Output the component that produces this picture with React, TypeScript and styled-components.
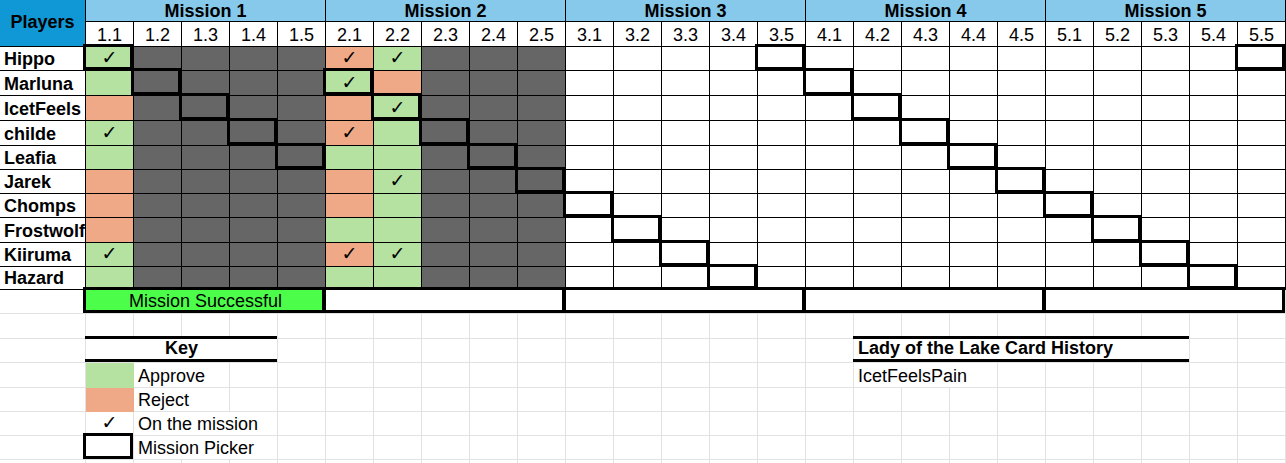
import React from 'react';
import styled, { createGlobalStyle, css } from 'styled-components';

const colors = {
  players: '#0f98d5',
  mission: '#86c9ea',
  approve: '#b6e2a1',
  reject: '#f0a986',
  locked: '#666666',
  success: '#4cfd4a',
  grid: '#e2e2e2',
  line: '#000000',
};

const PLAYERS = ['Hippo', 'Marluna', 'IcetFeels', 'childe', 'Leafia', 'Jarek', 'Chomps', 'Frostwolf', 'Kiiruma', 'Hazard'];

// a = approve, r = reject, one letter per player
const VOTES: Record<number, string> = {
  0: 'aaraarrraa',
  5: 'rarrarrara',
  6: 'araaaaaaaa',
};
const LOCKED = [1, 2, 3, 4, 7, 8, 9];

// columns where each player went on the mission
const CHECKS: Record<string, number[]> = {
  Hippo: [0, 5, 6],
  Marluna: [5],
  IcetFeels: [6],
  childe: [0, 5],
  Jarek: [6],
  Kiiruma: [0, 5, 6],
};

// who picked the team, per mission and round (player index)
const PICKERS = [
  [0, 1, 2, 3, 4],
  [1, 2, 3, 4, 5],
  [6, 7, 8, 9, 0],
  [1, 2, 3, 4, 5],
  [6, 7, 8, 9, 0],
];

const ROW_HEIGHTS = [22, 25, 24, 25, 25, 25, 24, 24, 24, 25, 24, 23, 24, 25, 24, 25, 24, 24, 24, 4];

const GlobalStyle = createGlobalStyle`
  html, body {
    margin: 0;
    padding: 0;
    background: #fff;
  }
  body {
    font-family: 'Liberation Sans', Arial, sans-serif;
    font-size: 18px;
    color: #000;
    overflow: hidden;
  }
`;

const Sheet = styled.div`
  display: grid;
  grid-template-columns: 86px repeat(25, 48px);
  grid-template-rows: ${ROW_HEIGHTS.map((h) => `${h}px`).join(' ')};
  width: 1286px;
`;

const pickerBox = css`
  &::after {
    content: '';
    position: absolute;
    top: -3px;
    left: -3px;
    right: 0;
    bottom: 0;
    border: 3px solid ${colors.line};
    z-index: 1;
    pointer-events: none;
  }
`;

interface CellProps {
  $span?: number;
  $fill?: string;
  $line?: string;
  $picker?: boolean;
}

const Cell = styled.div<CellProps>`
  position: relative;
  box-sizing: border-box;
  grid-column: span ${(p) => p.$span ?? 1};
  background: ${(p) => p.$fill ?? '#fff'};
  border-right: 1px solid ${(p) => p.$line ?? colors.grid};
  border-bottom: 1px solid ${(p) => p.$line ?? colors.grid};
  display: flex;
  align-items: flex-end;
  padding: 0 4px 1px;
  line-height: 20px;
  white-space: nowrap;
  ${(p) => p.$picker && pickerBox}
`;

const PlayersHead = styled(Cell)`
  grid-row: span 2;
  background: ${colors.players};
  border-color: ${colors.line};
  font-weight: bold;
  justify-content: center;
  align-items: center;
  padding-bottom: 3px;
`;

const MissionHead = styled(Cell)`
  grid-column: span 5;
  background: ${colors.mission};
  border-color: ${colors.line};
  font-weight: bold;
  justify-content: center;
  padding-bottom: 0;
`;

const RoundHead = styled(Cell)`
  border-color: ${colors.line};
  justify-content: center;
`;

const NameCell = styled(Cell)`
  border-color: ${colors.line};
  font-weight: bold;
  overflow: hidden;
`;

const VoteCell = styled(Cell)`
  border-color: ${colors.line};
  justify-content: center;
  align-items: center;
  padding: 0 0 2px;
`;

const Check = styled.span`
  font-family: 'DejaVu Sans', sans-serif;
  font-size: 19px;
  line-height: 1;
`;

const ResultCell = styled(Cell)`
  grid-column: span 5;
  justify-content: center;
  padding-bottom: 2px;

  &::after {
    content: '';
    position: absolute;
    top: -3px;
    left: -3px;
    right: 0;
    bottom: 0;
    border: 3px solid ${colors.line};
    z-index: 1;
  }
`;

const HeaderRule = css`
  &::after {
    content: '';
    position: absolute;
    top: -3px;
    left: -1px;
    right: 0;
    bottom: 0;
    border-top: 3px solid ${colors.line};
    border-bottom: 3px solid ${colors.line};
    z-index: 1;
  }
`;

const KeyTitle = styled(Cell)`
  grid-column: span 4;
  font-weight: bold;
  justify-content: center;
  padding-bottom: 4px;
  ${HeaderRule}
`;

const LadyTitle = styled(Cell)`
  grid-column: span 7;
  font-weight: bold;
  padding-bottom: 4px;
  ${HeaderRule}
`;

const Swatch = styled(Cell)`
  border-color: transparent;
`;

const KeyMark = styled(Cell)`
  justify-content: center;
  align-items: center;
  padding: 0 0 2px;
`;

const Label = styled(Cell)``;

const Blanks = ({ count }: { count: number }) => (
  <>
    {Array.from({ length: count }, (_, i) => (
      <Cell key={i} />
    ))}
  </>
);

const fillFor = (player: number, col: number) => {
  if (VOTES[col]) return VOTES[col][player] === 'a' ? colors.approve : colors.reject;
  if (LOCKED.includes(col)) return colors.locked;
  return '#fff';
};

const App = () => {
  return (
    <>
      <GlobalStyle />
      <Sheet>
        <PlayersHead>Players</PlayersHead>
        {[1, 2, 3, 4, 5].map((m) => (
          <MissionHead key={m}>Mission {m}</MissionHead>
        ))}
        {[1, 2, 3, 4, 5].map((m) =>
          [1, 2, 3, 4, 5].map((r) => <RoundHead key={`${m}.${r}`}>{m}.{r}</RoundHead>)
        )}

        {PLAYERS.map((name, p) => (
          <React.Fragment key={name}>
            <NameCell>{name}</NameCell>
            {Array.from({ length: 25 }, (_, c) => (
              <VoteCell
                key={c}
                $fill={fillFor(p, c)}
                $picker={PICKERS[Math.floor(c / 5)][c % 5] === p}
              >
                {CHECKS[name]?.includes(c) && <Check>✓</Check>}
              </VoteCell>
            ))}
          </React.Fragment>
        ))}

        <Cell />
        <ResultCell $fill={colors.success}>Mission Successful</ResultCell>
        <ResultCell />
        <ResultCell />
        <ResultCell />
        <ResultCell />

        <Blanks count={26} />

        <Cell />
        <KeyTitle>Key</KeyTitle>
        <Blanks count={12} />
        <LadyTitle>Lady of the Lake Card History</LadyTitle>
        <Blanks count={2} />

        <Cell />
        <Swatch $fill={colors.approve} />
        <Label $span={2}>Approve</Label>
        <Blanks count={13} />
        <Label $span={3}>IcetFeelsPain</Label>
        <Blanks count={6} />

        <Cell />
        <Swatch $fill={colors.reject} />
        <Label $span={2}>Reject</Label>
        <Blanks count={22} />

        <Cell />
        <KeyMark>
          <Check>✓</Check>
        </KeyMark>
        <Label $span={3}>On the mission</Label>
        <Blanks count={21} />

        <Cell />
        <KeyMark $picker />
        <Label $span={3}>Mission Picker</Label>
        <Blanks count={21} />

        <Blanks count={26} />
      </Sheet>
    </>
  );
};

export default App;
